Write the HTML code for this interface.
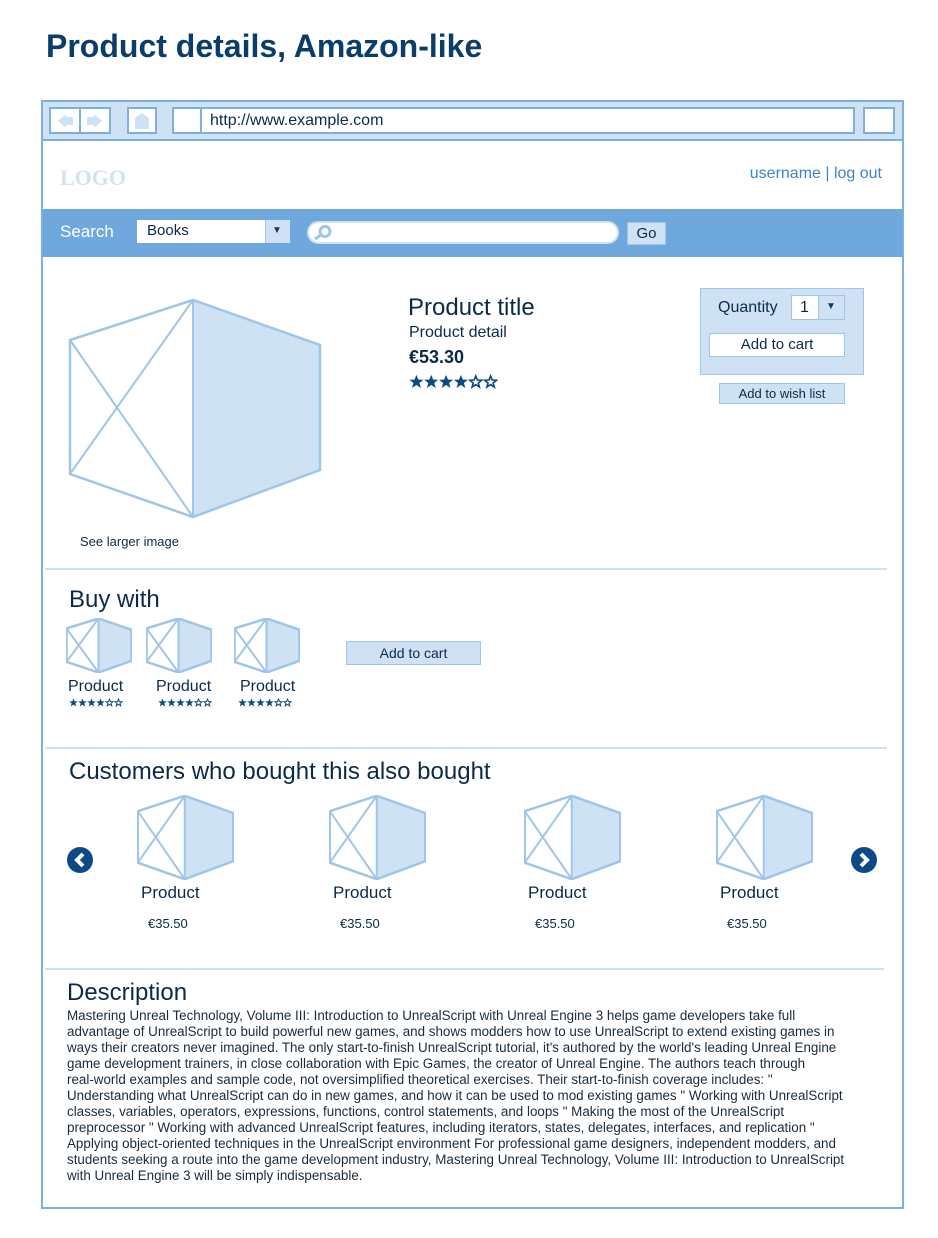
<!DOCTYPE html>
<html><head><meta charset="utf-8"><style>
*{margin:0;padding:0;box-sizing:border-box}
body{width:938px;height:1238px;background:#fff;font-family:"Liberation Sans",Arial,sans-serif;position:relative;overflow:hidden;color:#0b2a4a}
.a{position:absolute;white-space:nowrap}
.t{line-height:1}
.box{position:absolute;border:1px solid #9fc5e8}
.lb{background:#cfe2f3}
.sep{position:absolute;height:2px;background:#cfe2f3}
.btn{position:absolute;background:#cfe2f3;border:1px solid #9fc5e8;text-align:center;font-size:14px;color:#0b2a4a}
</style></head><body>
<svg width="0" height="0" style="position:absolute"><defs>
<symbol id="bx" viewBox="-2 -2 254 221" preserveAspectRatio="none">
<polygon points="123,0 250,45 250,170 123,217" fill="#cfe2f3"/>
<polygon points="0,40 123,0 250,45 250,170 123,217 0,174" fill="none" stroke="#9fc5e8" stroke-width="2.5" vector-effect="non-scaling-stroke"/>
<path d="M123 0V217M0 40L123 217M123 0L0 174" stroke="#9fc5e8" stroke-width="2" fill="none" vector-effect="non-scaling-stroke"/>
</symbol>
<symbol id="sf" viewBox="0 0 20 20"><polygon points="10,1 12.6,7.4 19.5,7.6 14,12 16,18.8 10,14.8 4,18.8 6,12 0.5,7.6 7.4,7.4" fill="#0b4a85"/></symbol>
<symbol id="so" viewBox="0 0 20 20"><polygon points="10,2.5 12.2,8 18,8.3 13.4,12 15,17.5 10,14.2 5,17.5 6.6,12 2,8.3 7.8,8" fill="none" stroke="#0b4a85" stroke-width="2.2"/></symbol>
<symbol id="st6" viewBox="0 0 120 20"><use href="#sf" x="0" width="20" height="20"/><use href="#sf" x="20" width="20" height="20"/><use href="#sf" x="40" width="20" height="20"/><use href="#sf" x="60" width="20" height="20"/><use href="#so" x="80" width="20" height="20"/><use href="#so" x="100" width="20" height="20"/></symbol>
</defs></svg>

<div class="a t" style="left:46px;top:30px;font-size:32px;font-weight:bold;color:#0b3d6b">Product details, Amazon-like</div>

<div class="a" style="left:41px;top:100px;width:863px;height:1109px;border:2px solid #7fb0dc"></div>
<div class="a lb" style="left:43px;top:102px;width:859px;height:39px;border-bottom:2px solid #7fb0dc"></div>
<div class="box" style="left:49px;top:107px;width:32px;height:27px;border:2px solid #7fb0dc;background:#fff"></div>
<div class="box" style="left:79px;top:107px;width:32px;height:27px;border:2px solid #7fb0dc;background:#fff"></div>
<svg class="a" style="left:52px;top:111px" width="56" height="20"><path d="M6 10L14 3V17Z" fill="#cfe2f3"/><rect x="13" y="6" width="8" height="8" fill="#cfe2f3"/><path d="M50 10L42 3V17Z" fill="#cfe2f3"/><rect x="35" y="6" width="8" height="8" fill="#cfe2f3"/></svg>
<div class="box" style="left:127px;top:107px;width:30px;height:27px;border:2px solid #7fb0dc;background:#fff"></div>
<svg class="a" style="left:134px;top:112px" width="16" height="18"><path d="M1 6L8 1L15 6V17H1Z" fill="#cfe2f3"/></svg>
<div class="box" style="left:172px;top:107px;width:30px;height:27px;border:2px solid #7fb0dc;background:#fff"></div>
<div class="box" style="left:200px;top:107px;width:655px;height:27px;border:2px solid #7fb0dc;background:#fff"></div>
<div class="a t" style="left:210px;top:113px;font-size:16px;color:#0b2a4a">http://www.example.com</div>
<div class="box" style="left:863px;top:107px;width:32px;height:27px;border:2px solid #7fb0dc;background:#fff"></div>

<div class="a t" style="left:60px;top:167px;font-size:22px;font-weight:bold;font-family:'Liberation Serif',serif;color:#d3e2f1">LOGO</div>
<div class="a t" style="right:56px;top:166px;font-size:16px;color:#3d85c6">username | log out</div>

<div class="a" style="left:43px;top:209px;width:859px;height:48px;background:#6fa8dc"></div>
<div class="a t" style="left:60px;top:223px;font-size:17px;color:#fff">Search</div>
<div class="a" style="left:137px;top:220px;width:153px;height:23px;background:#fff"></div>
<div class="a lb" style="left:265px;top:220px;width:25px;height:23px;border-left:1px solid #9fc5e8"></div>
<div class="a t" style="left:272px;top:226px;font-size:10px;color:#0b3d6b">▼</div>
<div class="a t" style="left:147px;top:223px;font-size:15px;color:#0b2a4a">Books</div>
<div class="a" style="left:307px;top:221px;width:312px;height:23px;background:#fff;border-radius:12px;border:2px solid #cfe2f3"></div>
<svg class="a" style="left:312px;top:224px" width="22" height="17"><circle cx="13" cy="7.5" r="5" fill="none" stroke="#9fc5e8" stroke-width="3"/><path d="M9 11L3 15" stroke="#9fc5e8" stroke-width="3"/></svg>
<div class="btn" style="left:627px;top:222px;width:39px;height:23px;line-height:21px;font-size:15px">Go</div>

<svg class="a" style="left:68px;top:298px" width="254" height="221"><use href="#bx" width="254" height="221"/></svg>
<div class="a t" style="left:80px;top:535px;font-size:13px">See larger image</div>

<div class="a t" style="left:408px;top:296px;font-size:24px">Product title</div>
<div class="a t" style="left:409px;top:325px;font-size:16px">Product detail</div>
<div class="a t" style="left:409px;top:348px;font-size:18px;font-weight:bold">€53.30</div>
<svg class="a" style="left:409px;top:374px" width="89" height="15"><use href="#st6" width="89" height="15"/></svg>

<div class="box lb" style="left:700px;top:288px;width:164px;height:87px"></div>
<div class="a t" style="left:718px;top:300px;font-size:16px">Quantity</div>
<div class="box" style="left:791px;top:295px;width:54px;height:25px;background:#fff"></div>
<div class="a lb" style="left:818px;top:296px;width:26px;height:23px;border-left:1px solid #9fc5e8"></div>
<div class="a t" style="left:826px;top:302px;font-size:10px;color:#0b3d6b">▼</div>
<div class="a t" style="left:800px;top:300px;font-size:16px">1</div>
<div class="btn" style="left:709px;top:333px;width:136px;height:24px;line-height:22px;font-size:15px;background:#fff">Add to cart</div>
<div class="btn" style="left:719px;top:383px;width:126px;height:21px;line-height:19px;font-size:13px">Add to wish list</div>

<div class="sep" style="left:45px;top:568px;width:842px"></div>

<div class="a t" style="left:69px;top:588px;font-size:24px">Buy with</div>
<svg class="a" style="left:66px;top:618px" width="66" height="55"><use href="#bx" width="66" height="55"/></svg>
<svg class="a" style="left:146px;top:618px" width="66" height="55"><use href="#bx" width="66" height="55"/></svg>
<svg class="a" style="left:234px;top:618px" width="66" height="55"><use href="#bx" width="66" height="55"/></svg>
<div class="a t" style="left:68px;top:679px;font-size:16px">Product</div>
<div class="a t" style="left:156px;top:679px;font-size:16px">Product</div>
<div class="a t" style="left:240px;top:679px;font-size:16px">Product</div>
<svg class="a" style="left:68px;top:698px" width="56" height="9"><use href="#st6" width="56" height="9"/></svg>
<svg class="a" style="left:157px;top:698px" width="56" height="9"><use href="#st6" width="56" height="9"/></svg>
<svg class="a" style="left:237px;top:698px" width="56" height="9"><use href="#st6" width="56" height="9"/></svg>
<div class="btn" style="left:346px;top:641px;width:135px;height:24px;line-height:22px">Add to cart</div>

<div class="sep" style="left:45px;top:747px;width:842px"></div>
<div class="a t" style="left:69px;top:760px;font-size:24px">Customers who bought this also bought</div>
<svg class="a" style="left:67px;top:847px" width="26" height="26"><circle cx="13" cy="13" r="13" fill="#0b4a85"/><path d="M16 7L10 13L16 19" stroke="#fff" stroke-width="4" fill="none"/></svg>
<svg class="a" style="left:851px;top:847px" width="26" height="26"><circle cx="13" cy="13" r="13" fill="#0b4a85"/><path d="M10 7L16 13L10 19" stroke="#fff" stroke-width="4" fill="none"/></svg>
<svg class="a" style="left:137px;top:795px" width="97" height="85"><use href="#bx" width="97" height="85"/></svg>
<svg class="a" style="left:329px;top:795px" width="97" height="85"><use href="#bx" width="97" height="85"/></svg>
<svg class="a" style="left:524px;top:795px" width="97" height="85"><use href="#bx" width="97" height="85"/></svg>
<svg class="a" style="left:716px;top:795px" width="97" height="85"><use href="#bx" width="97" height="85"/></svg>
<div class="a t" style="left:141px;top:884px;font-size:17px">Product</div>
<div class="a t" style="left:333px;top:884px;font-size:17px">Product</div>
<div class="a t" style="left:528px;top:884px;font-size:17px">Product</div>
<div class="a t" style="left:720px;top:884px;font-size:17px">Product</div>
<div class="a t" style="left:148px;top:917px;font-size:13px">€35.50</div>
<div class="a t" style="left:340px;top:917px;font-size:13px">€35.50</div>
<div class="a t" style="left:535px;top:917px;font-size:13px">€35.50</div>
<div class="a t" style="left:727px;top:917px;font-size:13px">€35.50</div>

<div class="sep" style="left:45px;top:968px;width:839px"></div>
<div class="a t" style="left:67px;top:981px;font-size:24px">Description</div>
<div class="a" style="left:67px;top:1008px;font-size:13.4px;line-height:16px;color:#1a2a3a">Mastering Unreal Technology, Volume III: Introduction to UnrealScript with Unreal Engine 3 helps game developers take full<br>advantage of UnrealScript to build powerful new games, and shows modders how to use UnrealScript to extend existing games in<br>ways their creators never imagined. The only start-to-finish UnrealScript tutorial, it's authored by the world's leading Unreal Engine<br>game development trainers, in close collaboration with Epic Games, the creator of Unreal Engine. The authors teach through<br>real-world examples and sample code, not oversimplified theoretical exercises. Their start-to-finish coverage includes: "<br>Understanding what UnrealScript can do in new games, and how it can be used to mod existing games " Working with UnrealScript<br>classes, variables, operators, expressions, functions, control statements, and loops " Making the most of the UnrealScript<br>preprocessor " Working with advanced UnrealScript features, including iterators, states, delegates, interfaces, and replication "<br>Applying object-oriented techniques in the UnrealScript environment For professional game designers, independent modders, and<br>students seeking a route into the game development industry, Mastering Unreal Technology, Volume III: Introduction to UnrealScript<br>with Unreal Engine 3 will be simply indispensable.</div>
</body></html>
